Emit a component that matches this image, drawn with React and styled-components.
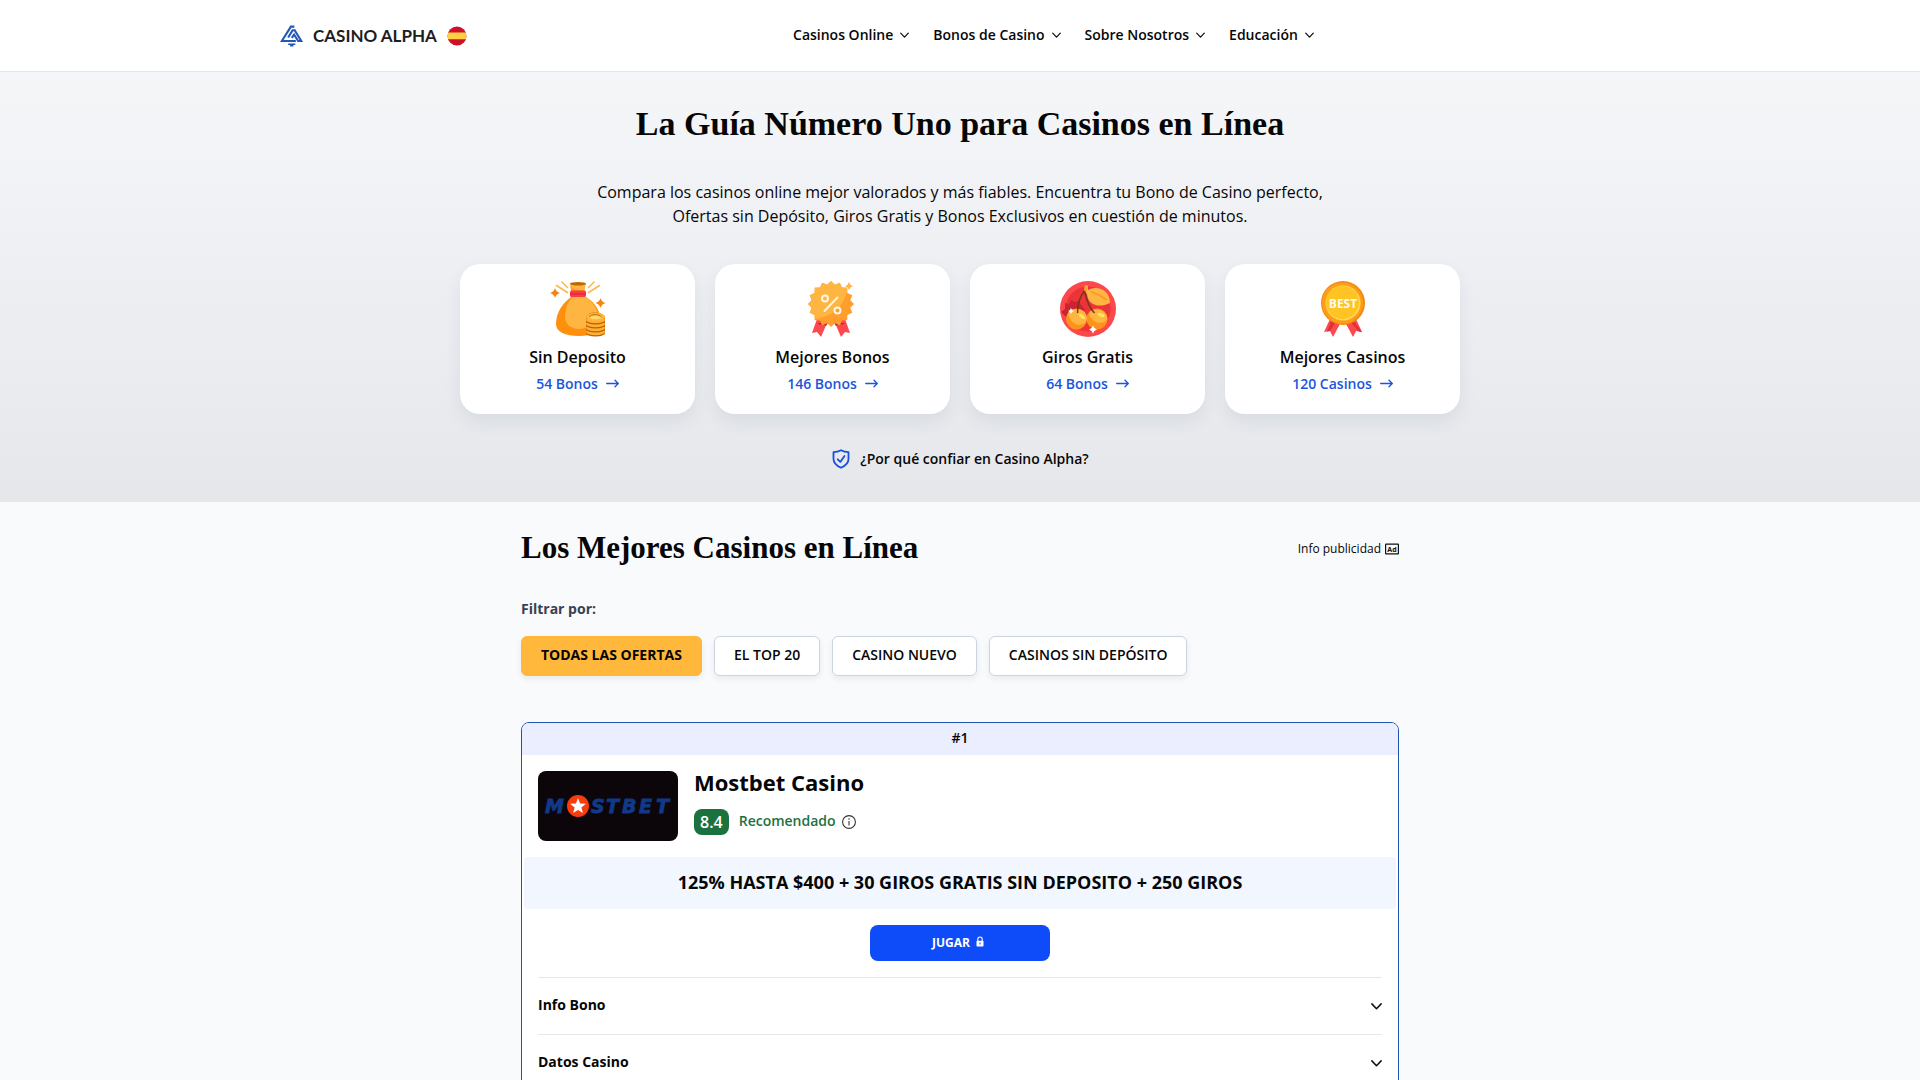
import React from "react";
import styled, { createGlobalStyle } from "styled-components";

const GlobalStyle = createGlobalStyle`
  *, *::before, *::after { box-sizing: border-box; }
  body {
    margin: 0;
    background: #f9fafc;
    color: #060606;
    font-family: "Open Sans", "Noto Sans", sans-serif;
    font-size: 16px;
    line-height: 24px;
  }
  h1, h2, h3, p, ul { margin: 0; padding: 0; }
  ul { list-style: none; }
  a { color: inherit; text-decoration: none; }
  button { font: inherit; color: inherit; cursor: pointer; }
  svg { display: block; flex: none; }
`;

const Header = styled.header`
  background: #fff;
  border-bottom: 1px solid #e5e7eb;
`;

const HeaderInner = styled.div`
  max-width: 1400px;
  margin: 0 auto;
  padding: 0 20px;
  height: 71px;
  display: flex;
  align-items: center;
`;

const Brand = styled.a`
  display: flex;
  align-items: center;
  gap: 10px;
`;

const BrandName = styled.span`
  font-family: Lato, sans-serif;
  font-size: 17px;
  font-weight: 700;
  color: #1d1d1f;
`;

const Nav = styled.nav`
  flex: 1;
  display: flex;
  justify-content: center;
  gap: 24px;
`;

const NavButton = styled.button`
  display: flex;
  align-items: center;
  gap: 7px;
  padding: 0 0 2px;
  border: 0;
  background: none;
  font-size: 14px;
  font-weight: 600;
`;

const Hero = styled.section`
  padding: 32px 20px 31px;
  background: linear-gradient(#f5f6f8, #eff0f4 40%, #e5e7ea);
  display: flex;
  flex-direction: column;
  align-items: center;
  text-align: center;
`;

const Heading = styled.h1`
  font-family: "Liberation Serif", serif;
  font-weight: 700;
  font-size: ${(p) => (p.$small ? 31 : 34)}px;
  line-height: 40px;
`;

const Intro = styled.p`
  max-width: 760px;
  margin-top: 36px;
`;

const OfferGrid = styled.ul`
  width: 100%;
  max-width: 1000px;
  margin-top: 36px;
  display: grid;
  grid-template-columns: repeat(4, 1fr);
  gap: 20px;
`;

const OfferCard = styled.a`
  display: flex;
  flex-direction: column;
  align-items: center;
  padding: 17px 16px 18px;
  border-radius: 20px;
  background: #fff;
  box-shadow: 0 8px 16px rgba(148, 163, 184, 0.2);
`;

const OfferTitle = styled.span`
  margin-top: 8px;
  font-weight: 600;
`;

const OfferCount = styled.span`
  display: flex;
  align-items: center;
  gap: 8px;
  margin-top: 3px;
  color: #1a56db;
  font-size: 14px;
  font-weight: 600;
`;

const TrustButton = styled.button`
  display: flex;
  align-items: center;
  gap: 9px;
  margin-top: 33px;
  padding: 0;
  border: 0;
  background: none;
  font-size: 14px;
  font-weight: 600;
`;

const Main = styled.main`
  max-width: 918px;
  margin: 0 auto;
  padding: 26px 20px 0;
`;

const SectionHead = styled.div`
  display: flex;
  align-items: center;
  justify-content: space-between;
`;

const AdInfo = styled.button`
  display: flex;
  align-items: center;
  gap: 4px;
  padding: 2px 0 0;
  border: 0;
  background: none;
  font-size: 12px;
`;

const FilterLabel = styled.p`
  margin-top: 29px;
  color: #374151;
  font-size: 14px;
  font-weight: 700;
`;

const Filters = styled.div`
  display: flex;
  flex-wrap: wrap;
  gap: 12px;
  margin-top: 15px;
`;

const FilterButton = styled.button`
  height: 40px;
  padding: 0 19px 2px;
  border: 1px solid ${(p) => (p.$active ? "#ffb83b" : "#cbd5e1")};
  border-radius: 6px;
  background: ${(p) => (p.$active ? "#ffb83b" : "#fff")};
  box-shadow: 0 3px 6px rgba(15, 23, 42, 0.07);
  font-size: 14px;
  font-weight: ${(p) => (p.$active ? 700 : 600)};
`;

const CasinoCard = styled.article`
  margin-top: 46px;
  border: 1px solid #1f55b0;
  border-radius: 8px;
  background: #fff;
  overflow: hidden;
`;

const Rank = styled.div`
  padding: 3px 0 5px;
  background: #ebeeff;
  text-align: center;
  font-size: 14px;
  font-weight: 600;
`;

const CasinoTop = styled.div`
  display: flex;
  gap: 16px;
  padding: 16px;
`;

const CasinoLogo = styled.div`
  width: 140px;
  height: 70px;
  border-radius: 8px;
  background: #0c060a;
  display: flex;
  align-items: center;
  justify-content: center;
`;

const CasinoName = styled.h3`
  font-size: 22px;
  line-height: 22px;
  font-weight: 700;
`;

const Rating = styled.div`
  display: flex;
  align-items: center;
  margin-top: 16px;
`;

const Score = styled.span`
  padding: 1px 6px;
  border-radius: 8px;
  background: #1c723e;
  color: #fff;
  font-weight: 600;
`;

const Verdict = styled.span`
  margin: 0 6px 0 10px;
  padding-bottom: 2px;
  color: #1c723e;
  font-size: 14px;
  font-weight: 600;
`;

const IconButton = styled.button`
  padding: 0;
  border: 0;
  background: none;
`;

const Bonus = styled.p`
  margin: 0 2px;
  padding: 13px 0 15px;
  border-radius: 4px;
  background: #f2f6ff;
  text-align: center;
  font-size: 18px;
  font-weight: 700;
`;

const PlayLink = styled.a`
  display: flex;
  align-items: center;
  justify-content: center;
  gap: 6px;
  width: 180px;
  height: 36px;
  margin: 16px auto;
  padding-right: 4px;
  border-radius: 8px;
  background: #0d4cf8;
  color: #fff;
  font-size: 12px;
  font-weight: 700;
`;

const Details = styled.div`
  padding: 0 16px;
`;

const DetailButton = styled.button`
  display: flex;
  align-items: center;
  justify-content: space-between;
  width: 100%;
  padding: 15px 0 17px;
  border: 0;
  border-top: 1px solid #e5e7eb;
  background: none;
  font-size: 14px;
  font-weight: 700;
`;

const Chevron = ({ size = 9 }) => (
  <svg width={size} height={size} viewBox="0 0 10 10" fill="none" stroke="#111" strokeWidth="1.4" strokeLinecap="round" strokeLinejoin="round">
    <path d="M.8 3.500 5 7.900 9.200 3.500" />
  </svg>
);

const Arrow = () => (
  <svg width="13" height="10" viewBox="0 0 13 10" fill="none" stroke="#1a56db" strokeWidth="1.3" strokeLinecap="round" strokeLinejoin="round">
    <path d="M.7 4.500H12.300M9 1.200 12.300 4.500 9 7.800" />
  </svg>
);

const BrandMark = () => (
  <svg width="23" height="22" viewBox="0 0 24 22" fill="none" stroke="#2159b8" strokeWidth="2.200">
    <path d="M15 1.200H11.400L1.900 16.200H16.500" />
    <path d="M8.500 12.500 13.200 5H15.300L22.200 16.200H18.900L14.700 9.500 12.300 13" />
    <path d="M8.500 19.700H16M10.500 21.200H14" strokeWidth="1.600" />
  </svg>
);

const SpainFlag = () => (
  <svg width="20" height="20" viewBox="0 0 20 20">
    <clipPath id="flag"><circle cx="10" cy="10" r="9.500" /></clipPath>
    <g clipPath="url(#flag)">
      <path fill="#d0102b" d="M0 0h20v20H0z" />
      <path fill="#ffd043" d="M0 6.500h20v6.800H0z" />
    </g>
  </svg>
);

const Sparkle = ({ x, y, r, fill }) => (
  <path
    transform={`translate(${x} ${y}) scale(${r})`}
    fill={fill}
    d="M0-1Q.2-.2 1 0 .2.2 0 1-.2.2-1 0-.2-.2 0-1Z"
  />
);

const MoneyBag = () => (
  <svg width="56" height="56" viewBox="0 0 56 56">
    <g stroke="#ffb545" strokeWidth="1.500" strokeLinecap="round">
      <path d="m6.500 4.500 11 7M12 1l5.500 5.500M38.500 6.500 44 1M38.500 11.500 49.500 4.500" />
    </g>
    <path fill="#ff900d" d="M21 16C13 22 6 31 6 43c0 8 9 12 23 12s22-4 22-13c0-13-7-21-15-26z" />
    <path fill="#ffb541" d="M23 16c-6 5-8 13-8 20 0 7 6 12 14 12 6 0 9-3 14-3l7-6c-2-11-8-19-14-23z" />
    <path fill="#ffb541" d="M20 2h16l-1.500 8h-13z" />
    <path fill="#ff9b1e" d="M20 3c1 4 5 6 10 6l5 1H21z" />
    <ellipse cx="28" cy="2.700" rx="8" ry="1.700" fill="#bd6900" />
    <rect x="20" y="9.500" width="16" height="6.500" rx="1.500" fill="#fc3c43" />
    <path stroke="#d71e3c" d="M20 13h16" />
    <path fill="#d97a07" d="M36 36c3-7 19-5 19 1v15c-4 4-15 4-19 0z" />
    {[51, 47, 43, 39].map((y) => (
      <g key={y}>
        <ellipse cx="45.500" cy={y + 1.3} rx="9.500" ry="3.200" fill="#b95f06" />
        <ellipse cx="45.500" cy={y} rx="9.500" ry="3.200" fill="#ffaf32" />
      </g>
    ))}
    <ellipse cx="45.500" cy="36" rx="9.500" ry="4" fill="#ffb541" />
    <ellipse cx="45.500" cy="36" rx="6" ry="2.200" fill="#ffdb66" />
    <path stroke="#a9650c" fill="none" d="M39.500 36c1-3 10-3 12 0" />
    <Sparkle x={5} y={12} r={5} fill="#f6840d" />
    <Sparkle x={50.5} y={22} r={5} fill="#f6840d" />
  </svg>
);

const sealPoints = Array.from({ length: 32 }, (_, i) => {
  const r = i % 2 ? 19.7 : 23;
  const a = (Math.PI * i) / 16 - Math.PI / 2;
  return `${(26 + r * Math.cos(a)).toFixed(2)},${(23 + r * Math.sin(a)).toFixed(2)}`;
}).join(" ");

const DiscountSeal = () => (
  <svg width="56" height="56" viewBox="0 0 56 56">
    <path fill="#fc484e" d="m12 38-5 14 5-1 4 5 6-14zM40 38l5 14-5-1-4 5-6-14z" />
    <path fill="#b62c35" d="m12 42 3 2 2-2 4 3 2-3zM40 42l-3 2-2-2-4 3-2-3z" />
    <clipPath id="seal"><polygon points={sealPoints} /></clipPath>
    <g clipPath="url(#seal)">
      <path fill="#ff9d2d" d="M0 0h56v56H0z" />
      <path fill="#ffb541" d="M0 0h43C43 22 30 37 6 38H0z" />
    </g>
    <g fill="none" stroke="#fff8e5" strokeWidth="1.900" strokeLinecap="round">
      <circle cx="20" cy="17.500" r="3" />
      <circle cx="32.500" cy="29.500" r="3" />
      <path d="M32.500 16.500 19.500 30" />
    </g>
    <Sparkle x={44} y={5} r={4} fill="#ffb541" />
  </svg>
);

const Cherries = () => (
  <svg width="56" height="56" viewBox="0 0 56 56">
    <circle cx="28" cy="28" r="28" fill="#fc484b" />
    <circle cx="28" cy="28" r="22.500" fill="#eb3339" />
    <path fill="#c92431" d="m5 22 4 1 2-4 4 2 4-1 2 4 4 4-4 5-6 9C8 38 4 34 1 31l4-3z" />
    <path fill="#ffb541" d="m25 4 3 1v4c8-5 22-1 22 13-10 5-22 3-23-9l-3-3z" />
    <path fill="none" stroke="#ff9425" strokeWidth="1.600" d="M31 11c6 1 11 5 16 8" />
    <circle cx="16.500" cy="38" r="10.500" fill="#ff921b" />
    <circle cx="37" cy="38" r="10.500" fill="#ff921b" />
    <path fill="#ffb541" d="M8 32c5-7 20-5 19 7-5 9-17 5-19-7zM29 32c4-7 18-4 18.500 6-5 7-17 4-18.500-6z" />
    <ellipse cx="22" cy="35.500" rx="3.500" ry="1.700" fill="#ffe75a" transform="rotate(40 22 35.500)" />
    <ellipse cx="41" cy="34" rx="3.700" ry="1.800" fill="#ffe75a" transform="rotate(18 41 34)" />
    <path fill="none" stroke="#7d3414" strokeWidth="1.500" d="M17.500 32c0-9 2-16 7-22 2 9 4 16 10 22" />
    <path stroke="#ff9d2d" strokeWidth="3" d="m25.500 10 1-6" />
    <Sparkle x={11} y={30} r={3} fill="#fff" />
    <Sparkle x={33} y={48.5} r={4} fill="#fff" />
  </svg>
);

const BestMedal = () => (
  <svg width="56" height="56" viewBox="0 0 56 56">
    <path fill="#fc484e" d="m15 38-6 13 6-1 3 6 8-15zM41 38l6 13-6-1-3 6-8-15z" />
    <path fill="#df3038" d="m20 42-5 8-3 .5L17 38zM37 38l10 13-3-.5-9-10z" />
    <circle cx="28" cy="22" r="22" fill="#f28a12" />
    <circle cx="27.500" cy="22" r="20.500" fill="#ff9d18" />
    <circle cx="28" cy="22" r="17.500" fill="#ffd958" />
    <circle cx="27.500" cy="21.500" r="16.500" fill="#ffc423" />
    <text x="28" y="26.500" textAnchor="middle" fontFamily="Open Sans, sans-serif" fontSize="12" fontWeight="700" fill="#fffbe9">BEST</text>
  </svg>
);

const ShieldCheck = () => (
  <svg width="20" height="20" viewBox="0 0 20 20" fill="none" stroke="#1750e0" strokeWidth="1.800" strokeLinecap="round" strokeLinejoin="round">
    <path d="M10 1.200C7.500 2.500 5.200 3 2.500 3.200V10c0 5 3.500 7 7.500 8.800 4-1.800 7.500-3.800 7.500-8.800V3.200C14.800 3 12.500 2.500 10 1.200z" />
    <path d="m6.700 10.300 2.600 2.600 4.200-6" />
  </svg>
);

const AdIcon = () => (
  <svg width="14" height="12" viewBox="0 0 14 12">
    <rect x=".6" y="1.100" width="12.800" height="9.800" rx=".5" fill="none" stroke="#111" strokeWidth="1.200" />
    <text x="7" y="8.800" textAnchor="middle" fontFamily="Noto Sans, sans-serif" fontSize="7" fontWeight="700" fill="#111">Ad</text>
  </svg>
);

const InfoIcon = () => (
  <svg width="14" height="14" viewBox="0 0 14 14" fill="none" stroke="#333" strokeWidth="1.100">
    <circle cx="7" cy="7" r="6.400" />
    <path d="M7 6v4.500M7 3.300v1.400" />
  </svg>
);

const LockIcon = () => (
  <svg width="8" height="14" viewBox="0 0 8 14">
    <path fill="none" stroke="#fff" strokeWidth="1.100" d="M1.800 5V3.200a2.200 2.200 0 0 1 4.400 0V5" />
    <rect x=".5" y="4.800" width="7" height="5.700" rx=".8" fill="#fff" />
    <path stroke="#0d4cf8" d="M4 6.500v2" />
  </svg>
);

const MostbetLogo = () => (
  <svg width="140" height="70" viewBox="0 0 140 70" role="img" aria-label="Mostbet">
    <g fill="#10398a" stroke="#10398a" strokeWidth=".8" fontFamily="DejaVu Sans, sans-serif" fontWeight="700" fontStyle="italic" fontSize="19">
      <text x="7" y="42">M</text>
      <text x="53 68 84 101 118" y="42">STBET</text>
    </g>
    <circle cx="40" cy="35" r="11" fill="#f83c0e" />
    <path fill="#fff" d="m40 27 2.100 5.400 5.800.3-4.500 3.700 1.500 5.600-4.900-3.100-4.900 3.100 1.500-5.600-4.500-3.700 5.800-.3z" />
  </svg>
);

const navItems = ["Casinos Online", "Bonos de Casino", "Sobre Nosotros", "Educación"];

const offers = [
  { title: "Sin Deposito", count: "54 Bonos", Icon: MoneyBag },
  { title: "Mejores Bonos", count: "146 Bonos", Icon: DiscountSeal },
  { title: "Giros Gratis", count: "64 Bonos", Icon: Cherries },
  { title: "Mejores Casinos", count: "120 Casinos", Icon: BestMedal },
];

const filters = ["TODAS LAS OFERTAS", "EL TOP 20", "CASINO NUEVO", "CASINOS SIN DEPÓSITO"];

export default function App() {
  return (
    <>
      <GlobalStyle />
      <Header>
        <HeaderInner>
          <Brand href="#">
            <BrandMark />
            <BrandName>CASINO ALPHA</BrandName>
            <SpainFlag />
          </Brand>
          <Nav>
            {navItems.map((item) => (
              <NavButton key={item} type="button">
                {item}
                <Chevron />
              </NavButton>
            ))}
          </Nav>
        </HeaderInner>
      </Header>
      <Hero>
        <Heading>La Guía Número Uno para Casinos en Línea</Heading>
        <Intro>
          Compara los casinos online mejor valorados y más fiables. Encuentra tu Bono de Casino perfecto,
          Ofertas sin Depósito, Giros Gratis y Bonos Exclusivos en cuestión de minutos.
        </Intro>
        <OfferGrid>
          {offers.map(({ title, count, Icon }) => (
            <li key={title}>
              <OfferCard href="#">
                <Icon />
                <OfferTitle>{title}</OfferTitle>
                <OfferCount>
                  {count}
                  <Arrow />
                </OfferCount>
              </OfferCard>
            </li>
          ))}
        </OfferGrid>
        <TrustButton type="button">
          <ShieldCheck />
          ¿Por qué confiar en Casino Alpha?
        </TrustButton>
      </Hero>
      <Main>
        <SectionHead>
          <Heading as="h2" $small>Los Mejores Casinos en Línea</Heading>
          <AdInfo type="button">
            Info publicidad
            <AdIcon />
          </AdInfo>
        </SectionHead>
        <FilterLabel>Filtrar por:</FilterLabel>
        <Filters>
          {filters.map((name, i) => (
            <FilterButton key={name} type="button" $active={i === 0}>{name}</FilterButton>
          ))}
        </Filters>
        <CasinoCard>
          <Rank>#1</Rank>
          <CasinoTop>
            <CasinoLogo><MostbetLogo /></CasinoLogo>
            <div>
              <CasinoName>Mostbet Casino</CasinoName>
              <Rating>
                <Score>8.4</Score>
                <Verdict>Recomendado</Verdict>
                <IconButton type="button" aria-label="Recomendado"><InfoIcon /></IconButton>
              </Rating>
            </div>
          </CasinoTop>
          <Bonus>125% HASTA $400 + 30 GIROS GRATIS SIN DEPOSITO + 250 GIROS</Bonus>
          <PlayLink href="#">
            JUGAR
            <LockIcon />
          </PlayLink>
          <Details>
            <DetailButton type="button">Info Bono<Chevron size={11} /></DetailButton>
            <DetailButton type="button">Datos Casino<Chevron size={11} /></DetailButton>
          </Details>
        </CasinoCard>
      </Main>
    </>
  );
}
